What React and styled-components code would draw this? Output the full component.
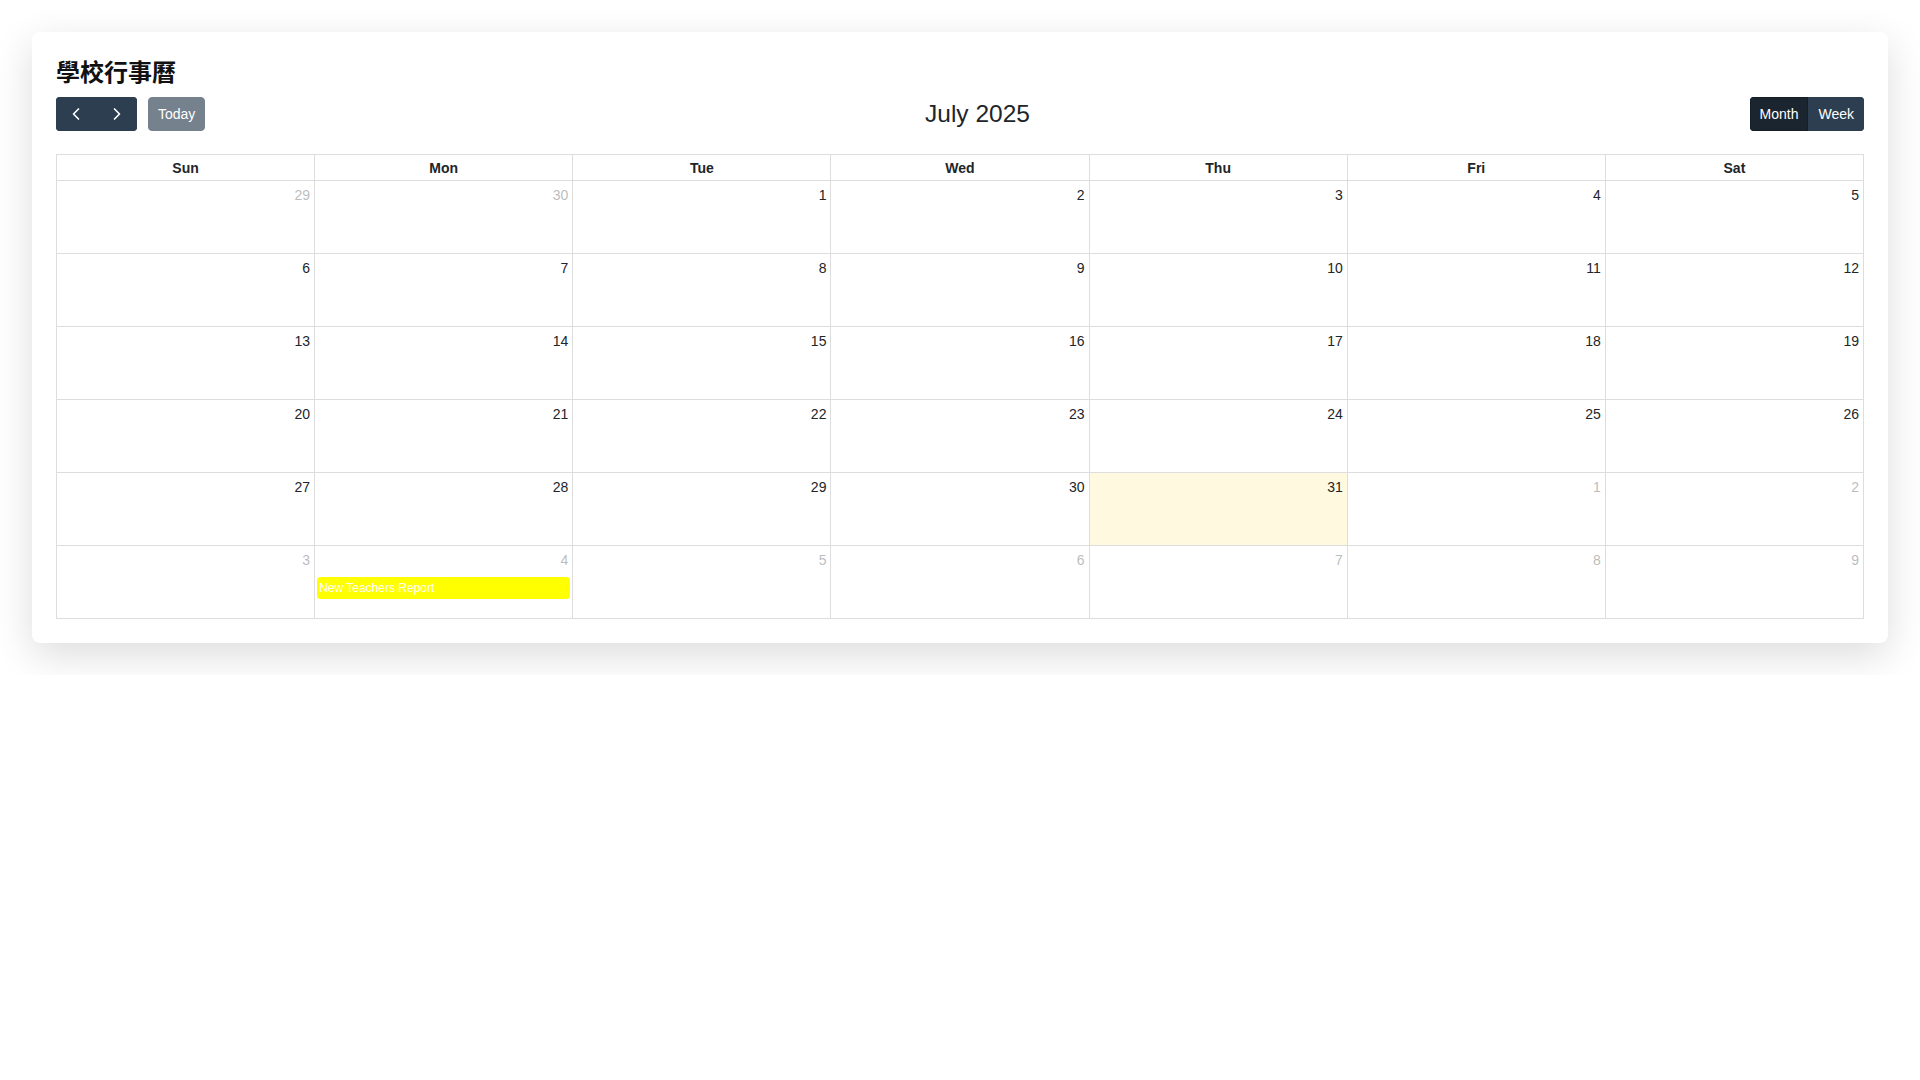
import React from 'react';
import styled, { createGlobalStyle } from 'styled-components';
import { ChevronLeft, ChevronRight } from 'lucide-react';

const GlobalStyle = createGlobalStyle`
  * {
    box-sizing: border-box;
  }

  body {
    margin: 0;
    background: #ffffff;
    font-family: 'Liberation Sans', Arial, 'Noto Sans CJK TC', sans-serif;
    font-size: 14px;
    color: #212529;
  }
`;

const Page = styled.div`
  padding: 32px;
`;

const Card = styled.div`
  background: #ffffff;
  border-radius: 8px;
  padding: 24px;
  box-shadow: 0 12px 40px rgba(0, 0, 0, 0.14);
`;

const PageTitle = styled.h1`
  margin: 0 0 12px;
  font-family: 'Noto Sans CJK TC', 'Noto Sans CJK SC', sans-serif;
  font-size: 24px;
  line-height: 29px;
  font-weight: 700;
  color: #111111;
`;

const Toolbar = styled.div`
  display: flex;
  justify-content: space-between;
  align-items: center;
  margin-bottom: 23px;
`;

const ToolbarChunk = styled.div`
  display: flex;
  align-items: center;
  gap: 11px;
`;

const ButtonGroup = styled.div`
  display: inline-flex;
  border-radius: 4px;
  overflow: hidden;
`;

const Button = styled.button`
  display: inline-flex;
  align-items: center;
  justify-content: center;
  height: 34px;
  width: ${({ $icon }) => ($icon ? '40.5px' : 'auto')};
  padding: 0 ${({ $icon }) => ($icon ? '0' : '9px')};
  border: 1px solid ${({ $active }) => ($active ? '#151e27' : '#2c3e50')};
  border-radius: ${({ $grouped }) => ($grouped ? '0' : '4px')};
  background: ${({ $active }) => ($active ? '#1a252f' : '#2c3e50')};
  color: #ffffff;
  font-family: 'Liberation Sans', Arial, sans-serif;
  font-size: 14px;
  line-height: 21px;
  cursor: pointer;
  opacity: ${({ disabled }) => (disabled ? 0.65 : 1)};
`;

const MonthTitle = styled.h2`
  margin: 0;
  font-size: 24.5px;
  font-weight: 400;
  color: #212529;
`;

const Grid = styled.div`
  display: grid;
  grid-template-columns: repeat(7, 1fr);
  grid-template-rows: 26px;
  grid-auto-rows: 73px;
  border-top: 1px solid #dddddd;
  border-left: 1px solid #dddddd;
`;

const HeadCell = styled.div`
  display: flex;
  align-items: center;
  justify-content: center;
  border-right: 1px solid #dddddd;
  border-bottom: 1px solid #dddddd;
  font-weight: 700;
  font-size: 14px;
  color: #212529;
`;

const DayCell = styled.div`
  display: flex;
  flex-direction: column;
  border-right: 1px solid #dddddd;
  border-bottom: 1px solid #dddddd;
  background: ${({ $today }) => ($today ? 'rgba(255, 220, 40, 0.15)' : 'transparent')};
  min-width: 0;
`;

const DayNumber = styled.span`
  align-self: flex-end;
  padding: 4px;
  font-size: 14px;
  line-height: 21px;
  color: #212529;
  opacity: ${({ $other }) => ($other ? 0.3 : 1)};
`;

const Event = styled.div`
  margin: 2px 2px 0;
  padding: 1px 1px;
  border: 1px solid ${({ $color }) => $color};
  border-radius: 3px;
  background: ${({ $color }) => $color};
  color: #ffffff;
  font-size: 12px;
  line-height: 18px;
  white-space: nowrap;
  overflow: hidden;
`;

const DAY_NAMES = ['Sun', 'Mon', 'Tue', 'Wed', 'Thu', 'Fri', 'Sat'];

const buildDays = () => {
  const days = [];
  [29, 30].forEach(d => days.push({ key: `6-${d}`, day: d, other: true }));
  for (let d = 1; d <= 31; d++) days.push({ key: `7-${d}`, day: d, other: false, today: d === 31 });
  for (let d = 1; d <= 9; d++) days.push({ key: `8-${d}`, day: d, other: true });
  return days;
};

const EVENTS = {
  '8-4': [{ title: 'New Teachers Report', color: '#ffff00' }],
};

export default function App() {
  const days = buildDays();

  return (
    <>
      <GlobalStyle />
      <Page>
        <Card>
          <PageTitle>學校行事曆</PageTitle>
          <Toolbar>
            <ToolbarChunk>
              <ButtonGroup>
                <Button $icon $grouped aria-label="prev">
                  <ChevronLeft size={20} strokeWidth={2} />
                </Button>
                <Button $icon $grouped aria-label="next">
                  <ChevronRight size={20} strokeWidth={2} />
                </Button>
              </ButtonGroup>
              <Button disabled>Today</Button>
            </ToolbarChunk>
            <MonthTitle>July 2025</MonthTitle>
            <ToolbarChunk>
              <ButtonGroup>
                <Button $grouped $active>Month</Button>
                <Button $grouped>Week</Button>
              </ButtonGroup>
            </ToolbarChunk>
          </Toolbar>
          <Grid>
            {DAY_NAMES.map(name => (
              <HeadCell key={name}>{name}</HeadCell>
            ))}
            {days.map(d => (
              <DayCell key={d.key} $today={d.today}>
                <DayNumber $other={d.other}>{d.day}</DayNumber>
                {(EVENTS[d.key] || []).map(ev => (
                  <Event key={ev.title} $color={ev.color}>
                    {ev.title}
                  </Event>
                ))}
              </DayCell>
            ))}
          </Grid>
        </Card>
      </Page>
    </>
  );
}
